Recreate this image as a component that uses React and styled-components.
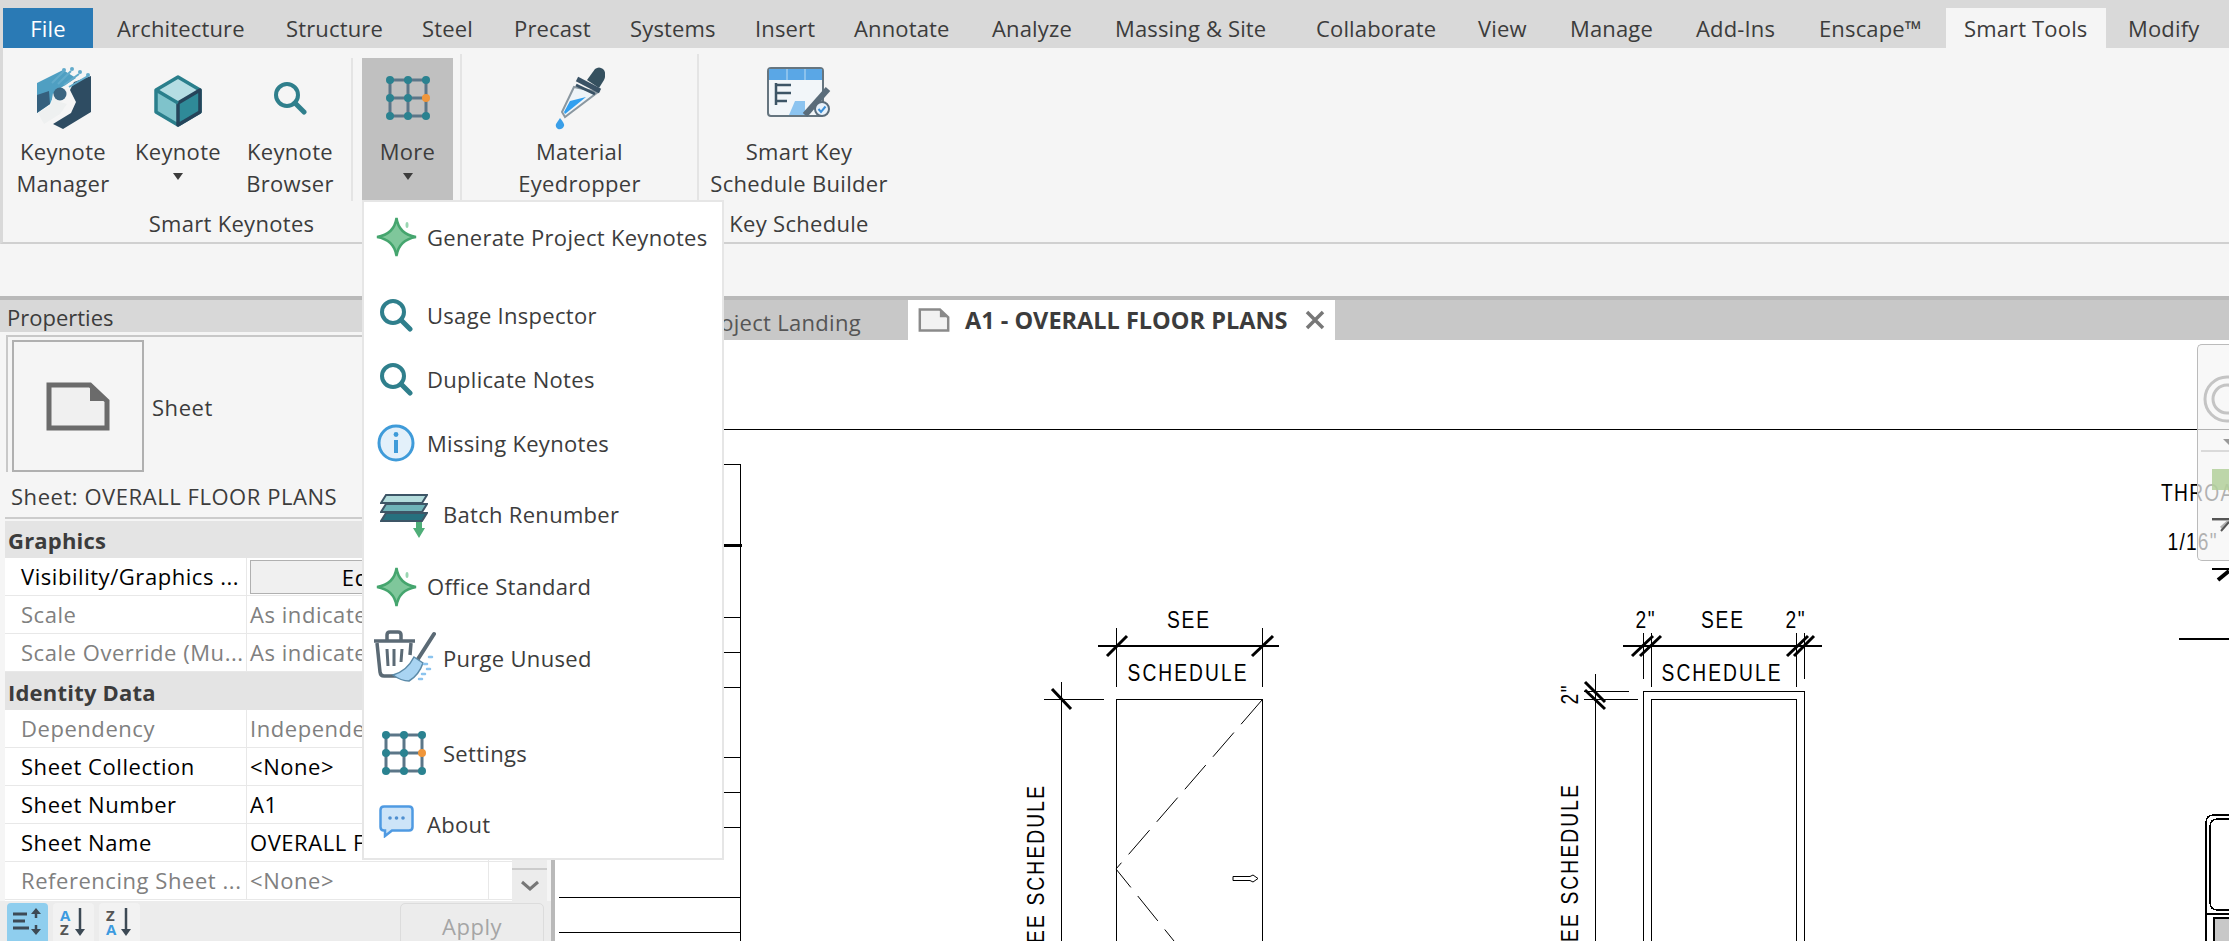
import React from 'react';
import styled, { createGlobalStyle } from 'styled-components';

const GlobalStyle = createGlobalStyle`
	html, body {
		margin: 0;
		padding: 0;
		background: #fff;
		overflow: hidden;
	}
	* {
		box-sizing: border-box;
	}
`;

const tabs = [
	{ label: 'Architecture', w: 169 },
	{ label: 'Structure', w: 136 },
	{ label: 'Steel', w: 92 },
	{ label: 'Precast', w: 116 },
	{ label: 'Systems', w: 125 },
	{ label: 'Insert', w: 99 },
	{ label: 'Annotate', w: 138 },
	{ label: 'Analyze', w: 123 },
	{ label: 'Massing & Site', w: 201 },
	{ label: 'Collaborate', w: 162 },
	{ label: 'View', w: 92 },
	{ label: 'Manage', w: 126 },
	{ label: 'Add-Ins', w: 123 },
	{ label: 'Enscape™', w: 147.5 },
	{ label: 'Smart Tools', w: 160, active: true },
	{ label: 'Modify', w: 100 }
];

const SearchIcon = ({ size = 34 }) => (
	<svg width={size} height={size} viewBox="0 0 34 34" fill="none">
		<circle cx="14" cy="14" r="11" stroke="#2f7f8c" strokeWidth="4" />
		<path d="M22 22 L31 31" stroke="#2f7f8c" strokeWidth="5" strokeLinecap="round" />
	</svg>
);

const GridIcon = () => (
	<svg width="44" height="44" viewBox="0 0 44 44">
		<path d="M4 4H40V40H4Z M22 4V40 M4 22H40" fill="none" stroke="#5b7688" strokeWidth="3" />
		{[4, 22, 40].map((y) =>
			[4, 22, 40].map((x) => <circle key={`${x}-${y}`} cx={x} cy={y} r="4" fill={x === 40 && y === 22 ? '#f0963a' : '#2a8290'} />)
		)}
	</svg>
);

const StarIcon = () => (
	<svg width="41" height="40" viewBox="0 0 41 40">
		<path d="M20.5 1 C22 12 28 18 40 20 C28 22 22 28 20.5 39 C19 28 13 22 1 20 C13 18 19 12 20.5 1Z" fill="#7fc79b" stroke="#45a56e" strokeWidth="2.500" />
		<ellipse cx="31" cy="8" rx="1.5" ry="3" fill="#9ad6b2" />
	</svg>
);

const InfoIcon = () => (
	<svg width="38" height="38" viewBox="0 0 38 38">
		<circle cx="19" cy="19" r="17" fill="#e3f0fa" stroke="#3f9bd9" strokeWidth="3" />
		<circle cx="19" cy="10.5" r="2.4" fill="#3f9bd9" />
		<path d="M19 16V29" stroke="#3f9bd9" strokeWidth="4" />
	</svg>
);

const BatchIcon = () => (
	<svg width="48" height="45" viewBox="0 0 48 45">
		<path d="M36 26H42V35H45L39 45L33 35H36Z" fill="#4fae78" />
		<path d="M6 2H47L42 10H1Z" fill="#b4dcdc" stroke="#3d5566" strokeWidth="2" />
		<path d="M6 11H47L42 19H1Z" fill="#6fb3b8" stroke="#3d5566" strokeWidth="2" />
		<path d="M6 20H47L42 28H1Z" fill="#26707e" stroke="#3d5566" strokeWidth="2" />
	</svg>
);

const PurgeIcon = () => (
	<svg width="63" height="54" viewBox="0 0 63 54" fill="none">
		<path d="M1 12H42 M14 11V6Q14 3 17 3H25Q28 3 28 6V11" stroke="#5b6a75" strokeWidth="3.5" />
		<path d="M4 14L7 43Q7.500 47 11 47H24 M38 14L37 26" stroke="#5b6a75" strokeWidth="3.5" />
		<path d="M14 20L15 37 M21 20V37 M29 20L28 33" stroke="#5b6a75" strokeWidth="3" />
		<path d="M61 5L45 30" stroke="#5b6a75" strokeWidth="4" strokeLinecap="round" />
		<path d="M41 28L50 34Q46 46 36 52Q28 52 20 46Q34 42 41 28Z" fill="#a9d4f2" stroke="#5b8aa8" strokeWidth="1.5" />
		<path d="M56 28h3 M51 35h3 M54 40h3 M49 45h3 M46 50h3" stroke="#8cc4ee" strokeWidth="2.500" strokeLinecap="round" />
	</svg>
);

const BubbleIcon = () => (
	<svg width="35" height="33" viewBox="0 0 35 33">
		<path d="M5 1.500H30Q33.500 1.500 33.500 5V22Q33.500 25.500 30 25.500H13L6 31V25.500H5Q1.500 25.500 1.500 22V5Q1.500 1.500 5 1.500Z" fill="#cde4f8" stroke="#4f9ae2" strokeWidth="2.500" />
		<circle cx="11" cy="13" r="1.800" fill="#4f8fd0" />
		<circle cx="17.500" cy="13" r="1.800" fill="#4f8fd0" />
		<circle cx="24" cy="13" r="1.800" fill="#4f8fd0" />
	</svg>
);

const LogoIcon = () => (
	<svg width="55" height="63" viewBox="0 0 55 63" fill="none">
		<path d="M1 17L27 4L40 12L20 25L14 38L1 47Z" fill="#4f9fc2" />
		<path d="M1 29L13 25L14 38L1 47Z" fill="#35607e" />
		<path d="M38 16L55 10V46L27 63L17 58L35 47L40 36L34 24Z" fill="#2e4c62" />
		<path d="M2 47L15 39L17 27L24 36L31 38L24 48L8 58Z" fill="#eef0f0" />
		<circle cx="24" cy="28" r="6.500" fill="#3b6580" />
		<path d="M16 17L28 5 M22 18L35 5 M28 19L43 8 M33 21L52 10" stroke="#62abcb" strokeWidth="2" />
		<circle cx="28" cy="4" r="2" fill="#62abcb" />
		<circle cx="36" cy="3" r="2" fill="#62abcb" />
		<circle cx="44" cy="6" r="2" fill="#62abcb" />
		<circle cx="52" cy="9" r="2" fill="#62abcb" />
	</svg>
);

const CubeIcon = () => (
	<svg width="48" height="52" viewBox="0 0 48 52">
		<path d="M24 3L45 15L24 28L3 15Z" fill="#b5dde3" />
		<path d="M3 15L24 28V49L3 37Z" fill="#7fc3cb" />
		<path d="M45 15L24 28V49L45 37Z" fill="#2f8a98" />
		<path d="M24 2L46 15V37L24 50L2 37V15Z" fill="none" stroke="#2a7f8c" strokeWidth="3.500" strokeLinejoin="round" />
		<path d="M46 15L24 28V50L46 37Z" fill="none" stroke="#25445a" strokeWidth="3.500" strokeLinejoin="round" />
		<path d="M2 15L24 28" stroke="#2a7f8c" strokeWidth="3.500" />
	</svg>
);

const DropperIcon = () => (
	<svg width="50" height="64" viewBox="0 0 50 64" fill="none">
		<path d="M19 21L43 26L10 51L7 46Z" fill="#eef4f8" stroke="#8a97a0" strokeWidth="2" />
		<path d="M15 35L31 31L10 48L9 46Z" fill="#2f9ff0" />
		<path d="M32 14L40 3Q44 0 48 3Q52 7 49 14L44 22Z" fill="#35505f" />
		<path d="M22 13L45 25" stroke="#3a5265" strokeWidth="5" />
		<path d="M21 19L40 28" stroke="#3a5265" strokeWidth="3" />
		<path d="M5 52Q10 58 9 60Q7 64 3 63Q0 61 1 58Q3 55 5 52Z" fill="#3a9fe8" />
	</svg>
);

const ScheduleIcon = () => (
	<svg width="64" height="50" viewBox="0 0 64 50" fill="none">
		<rect x="1" y="1" width="55" height="48" rx="3" fill="#f2f6f9" stroke="#66757f" strokeWidth="2" />
		<path d="M2 2H55V13H2Z" fill="#5aa7e6" />
		<path d="M20 2V13 M38 2V13" stroke="#9ccbf0" strokeWidth="1.500" />
		<path d="M9 18H24 M9 26H24 M9 34H20 M9 16V38" stroke="#3d5566" strokeWidth="2.500" />
		<path d="M28 34H38V48H22Z" fill="#8cc4f0" />
		<path d="M61 22L38 48" stroke="#5a6c7a" strokeWidth="6" />
		<circle cx="55" cy="42" r="7" fill="#e8f2fb" stroke="#5a6c7a" strokeWidth="2" />
		<path d="M51.500 42L54 45L58.500 39.500" stroke="#3b8fd8" strokeWidth="2" />
	</svg>
);

const SheetGlyph = ({ w, h, stroke, fill }) => (
	<svg width={w} height={h} viewBox="0 0 64 49">
		<path d="M3 3H44L61 19V46H3Z" fill={fill} stroke={stroke} strokeWidth="5" />
		<path d="M44 3L61 19H44Z" fill={stroke} />
	</svg>
);

const menuItems = [
	{ label: 'Generate Project Keynotes', icon: <StarIcon />, gap: 11, lift: 1 },
	{ label: 'Usage Inspector', icon: <SearchIcon />, gap: 28, lift: 1 },
	{ label: 'Duplicate Notes', icon: <SearchIcon />, gap: 14, lift: 1 },
	{ label: 'Missing Keynotes', icon: <InfoIcon />, gap: 14, lift: 1 },
	{ label: 'Batch Renumber', icon: <BatchIcon />, gap: 21, lift: 0, wide: true },
	{ label: 'Office Standard', icon: <StarIcon />, gap: 22, lift: 0.5 },
	{ label: 'Purge Unused', icon: <PurgeIcon />, gap: 22, lift: 3, wide: true },
	{ label: 'Settings', icon: <GridIcon />, gap: 45, lift: 1, wide: true },
	{ label: 'About', icon: <BubbleIcon />, gap: 21, lift: 4 }
];

const App = () => (
	<Screen>
		<GlobalStyle />
		<TabRow>
			<FileTab>File</FileTab>
			{tabs.map((tab) => (
				<Tab key={tab.label} $w={tab.w} $active={tab.active}>
					{tab.label}
				</Tab>
			))}
		</TabRow>
		<Ribbon>
			<Panel $w={457}>
				<PanelBody>
					<RibbonButton $w={120}>
						<IconSlot><LogoIcon /></IconSlot>
						<ButtonLine>Keynote</ButtonLine>
						<ButtonLine>Manager</ButtonLine>
					</RibbonButton>
					<RibbonButton $w={110}>
						<IconSlot $lift={3}><CubeIcon /></IconSlot>
						<ButtonLine>Keynote</ButtonLine>
						<Caret />
					</RibbonButton>
					<RibbonButton $w={114}>
						<IconSlot><SearchIcon /></IconSlot>
						<ButtonLine>Keynote</ButtonLine>
						<ButtonLine>Browser</ButtonLine>
					</RibbonButton>
					<InnerSeparator />
					<RibbonButton $w={91} $pressed>
						<IconSlot><GridIcon /></IconSlot>
						<ButtonLine>More</ButtonLine>
						<Caret />
					</RibbonButton>
				</PanelBody>
				<PanelLabel>Smart Keynotes</PanelLabel>
			</Panel>
			<Panel $w={237} $divided>
				<PanelBody $pad={2}>
					<RibbonButton $w={235}>
						<IconSlot><DropperIcon /></IconSlot>
						<ButtonLine>Material</ButtonLine>
						<ButtonLine>Eyedropper</ButtonLine>
					</RibbonButton>
				</PanelBody>
			</Panel>
			<Panel $w={204} $divided>
				<PanelBody $pad={2}>
					<RibbonButton $w={200}>
						<IconSlot $lift={-6}><ScheduleIcon /></IconSlot>
						<ButtonLine>Smart Key</ButtonLine>
						<ButtonLine>Schedule Builder</ButtonLine>
					</RibbonButton>
				</PanelBody>
				<PanelLabel>Key Schedule</PanelLabel>
			</Panel>
		</Ribbon>
		<OptionsBar />
		<Workspace>
			<PropertiesPanel>
				<PanelTitle>Properties</PanelTitle>
				<TypeSelector>
					<TypePreview>
						<SheetGlyph w={64} h={49} stroke="#6b6b6b" fill="#f0f0f0" />
					</TypePreview>
					<TypeName>Sheet</TypeName>
				</TypeSelector>
				<InstanceLine>Sheet: OVERALL FLOOR PLANS</InstanceLine>
				<TableWrap>
					<PropertyTable>
						<SectionHead>Graphics</SectionHead>
						<PropRow>
							<PropLabel>Visibility/Graphics ...</PropLabel>
							<PropValue><EditButton>Edit...</EditButton></PropValue>
							<PropExtra />
						</PropRow>
						<PropRow>
							<PropLabel $muted>Scale</PropLabel>
							<PropValue $muted>As indicated</PropValue>
							<PropExtra />
						</PropRow>
						<PropRow>
							<PropLabel $muted>Scale Override (Mu...</PropLabel>
							<PropValue $muted>As indicated</PropValue>
							<PropExtra />
						</PropRow>
						<SectionHead>Identity Data</SectionHead>
						<PropRow>
							<PropLabel $muted>Dependency</PropLabel>
							<PropValue $muted>Independent</PropValue>
							<PropExtra />
						</PropRow>
						<PropRow>
							<PropLabel>Sheet Collection</PropLabel>
							<PropValue>&lt;None&gt;</PropValue>
							<PropExtra />
						</PropRow>
						<PropRow>
							<PropLabel>Sheet Number</PropLabel>
							<PropValue>A1</PropValue>
							<PropExtra />
						</PropRow>
						<PropRow>
							<PropLabel>Sheet Name</PropLabel>
							<PropValue>OVERALL FLOOR PLANS</PropValue>
							<PropExtra />
						</PropRow>
						<PropRow>
							<PropLabel $muted>Referencing Sheet ...</PropLabel>
							<PropValue $muted>&lt;None&gt;</PropValue>
							<PropExtra />
						</PropRow>
					</PropertyTable>
					<ScrollColumn>
						<ScrollDown>
							<svg width="20" height="12" viewBox="0 0 20 12" fill="none">
								<path d="M2 2L10 9L18 2" stroke="#777" strokeWidth="3" />
							</svg>
						</ScrollDown>
					</ScrollColumn>
				</TableWrap>
				<SortBar>
					<SortButton $active>
						<svg width="30" height="30" viewBox="0 0 30 30" fill="none">
							<path d="M0 7H14 M0 14H12 M0 21H16" stroke="#3d4a55" strokeWidth="3" />
							<path d="M23 11V5 M23 18V24" stroke="#3d4a55" strokeWidth="2.500" />
							<path d="M18 7L23 1L28 7Z M18 22L23 28L28 22Z" fill="#3d4a55" />
						</svg>
					</SortButton>
					<SortButton>
						<SortGlyph>
							<text x="1" y="14" fill="#3d9be0">A</text>
							<text x="1" y="28" fill="#555">Z</text>
							<path d="M21 1V25" stroke="#3d4a55" strokeWidth="2.500" />
							<path d="M16 22L21 29L26 22Z" fill="#3d4a55" />
						</SortGlyph>
					</SortButton>
					<SortButton>
						<SortGlyph>
							<text x="1" y="14" fill="#555">Z</text>
							<text x="1" y="28" fill="#3d9be0">A</text>
							<path d="M21 1V25" stroke="#3d4a55" strokeWidth="2.500" />
							<path d="M16 22L21 29L26 22Z" fill="#3d4a55" />
						</SortGlyph>
					</SortButton>
					<ApplyButton>Apply</ApplyButton>
				</SortBar>
			</PropertiesPanel>
			<ViewArea>
				<ViewTabs>
					<InactiveView>Project Landing</InactiveView>
					<ActiveView>
						<SheetGlyph w={32} h={24} stroke="#8a8a8a" fill="#f2f2f2" />
						<ViewTitle>A1 - OVERALL FLOOR PLANS</ViewTitle>
						<svg width="20" height="20" viewBox="0 0 20 20" fill="none">
							<path d="M2 2L18 18 M18 2L2 18" stroke="#777" strokeWidth="3.500" />
						</svg>
					</ActiveView>
				</ViewTabs>
				<Sheet />
				<NavBar>
					<svg width="32" height="217" viewBox="0 0 32 217" fill="none">
						<circle cx="30" cy="55" r="22" stroke="#c4c4c4" strokeWidth="3" />
						<circle cx="30" cy="55" r="14" stroke="#c4c4c4" strokeWidth="3" />
						<path d="M26 95H32V101Z" fill="#999" />
						<path d="M4 107H32" stroke="#d0d0d0" strokeWidth="1.500" />
						<path d="M15 125H32V146H15Z" fill="#b3d09b" opacity="0.85" />
						<path d="M15 175H32 M24 187L32 178" stroke="#555" strokeWidth="2" />
					</svg>
				</NavBar>
			</ViewArea>
		</Workspace>
		<DropMenu>
			{menuItems.map((item) => (
				<MenuRow key={item.label} $gap={item.gap}>
					<MenuIcon $wide={item.wide} $lift={item.lift}>
						{item.icon}
					</MenuIcon>
					<MenuText>{item.label}</MenuText>
				</MenuRow>
			))}
		</DropMenu>
	</Screen>
);

// CAD lettering is narrower than the font, so squeeze it and let the spacing take up the rest
const SQUEEZE = 0.8;

const DrawText = ({ x, y, len, up, end, children }) => (
	<SheetText
		transform={`translate(${x} ${y}) ${up ? 'rotate(-90) ' : ''}scale(${SQUEEZE} 1)`}
		textAnchor={end ? 'end' : 'middle'}
		textLength={len / SQUEEZE}
		lengthAdjust="spacing"
	>
		{children}
	</SheetText>
);

// the drawing on the sheet, written in page coordinates
const leftRules = [464.5, 617.5, 652.5, 687.5, 757.5, 792.5, 827.5, 897.5, 932.5];

const Sheet = () => (
	<SheetSvg viewBox="555 340 1674 601" width="1674" height="601">
		<g stroke="#000" strokeWidth="1.500" fill="none" shapeRendering="crispEdges">
			<path d="M557 429.500H2229" />
			<path d="M740.500 464V941" />
			{leftRules.map((y) => (
				<path key={y} d={`M559 ${y}H740.500`} />
			))}

			{/* single door */}
			<path d="M1098 646H1279 M1116.500 628V687 M1262.500 628V687" />
			<path d="M1061.500 682V941 M1044 699.500H1104" />
			<path d="M1116.500 941V699.500H1262.500V941" />
			{/* double frame */}
			<path d="M1623 646H1822 M1643.500 633V679 M1651.500 633V687 M1796.500 633V687 M1804.500 633V679" />
			<path d="M1595.500 674V941 M1584 691.500H1629 M1584 699.500H1638" />
			<path d="M1643.500 941V691.500H1804.500V941 M1651.500 941V699.500H1796.500V941" />
			{/* right edge */}
			<path d="M2212 520H2229 M2212 569H2229" />
			<path d="M2179 639H2229" strokeWidth="2" />
			<path d="M2229 815H2214Q2206 815 2206 823V941 M2229 819H2218Q2210 819 2210 827V902Q2210 910 2218 910H2229 M2207 914H2229 M2214 941V918H2229" />
		</g>
		<path d="M2215 919H2229V941H2215Z" fill="#c8c8c8" />

		<g stroke="#000" strokeWidth="3" fill="none">
			<path d="M723 545.500H742" />
			<path d="M1107 656L1127 636 M1252 656L1273 636 M1052 689L1071 709" />
			<path d="M1632 656L1653 636 M1640 656L1661 636 M1787 656L1808 636 M1794 656L1814 636" />
			<path d="M1585 682L1605 702 M1585 690L1605 709" />
			<path d="M2218 580L2229 571" strokeWidth="4" />
			<path d="M2221 528L2229 521" />
		</g>

		<g stroke="#000" strokeWidth="1" fill="none">
			<path d="M1262 700L1116 869L1174 941" strokeDasharray="32 11" />
			<path d="M1233 876.500H1250L1253 875L1258 878.500L1253 882L1250 880.500H1233Z" />
		</g>

		<DrawText x={1188} y={628} len={42}>SEE</DrawText>
		<DrawText x={1187} y={681} len={119}>SCHEDULE</DrawText>
		<DrawText x={1722} y={628} len={42}>SEE</DrawText>
		<DrawText x={1721} y={681} len={119}>SCHEDULE</DrawText>
		<DrawText x={1645} y={628} len={19}>2"</DrawText>
		<DrawText x={1795} y={628} len={19}>2"</DrawText>
		<DrawText x={1578} y={695} len={19} up>2"</DrawText>
		<DrawText x={1044} y={786} len={172} up end>SEE SCHEDULE</DrawText>
		<DrawText x={1578} y={785} len={172} up end>SEE SCHEDULE</DrawText>
		<DrawText x={2203} y={501} len={84}>THROAT</DrawText>
		<DrawText x={2192} y={550} len={49}>1/16"</DrawText>
	</SheetSvg>
);

export default App;

const uiFont = `"Open Sans", "Noto Sans", sans-serif`;

const Screen = styled.div`
	position: relative;
	width: 2229px;
	height: 941px;
	overflow: hidden;
	background: #fff;
	font-family: ${uiFont};
	font-size: 22px;
	letter-spacing: 0.3px;
	color: #3c3c3c;
`;

const TabRow = styled.div`
	display: flex;
	align-items: flex-end;
	height: 48px;
	padding-left: 3px;
	background: #d9d9d9;
	letter-spacing: 0.15px;
`;

const FileTab = styled.div`
	display: flex;
	align-items: center;
	justify-content: center;
	width: 90px;
	height: 40px;
	margin-right: 3.500px;
	background: #2a7ab5;
	color: #fff;
`;

const Tab = styled.div`
	display: flex;
	align-items: center;
	width: ${(props) => props.$w}px;
	height: 40px;
	padding-left: ${(props) => (props.$active ? '18px' : '20.500px')};
	margin-right: ${(props) => (props.$active ? '1.500px' : '0')};
	background: ${(props) => (props.$active ? '#f5f5f5' : 'transparent')};
	white-space: nowrap;
	flex-shrink: 0;
`;

const Ribbon = styled.div`
	display: flex;
	height: 196px;
	background: #f5f5f5;
	border-left: 3px solid #d9d9d9;
	border-bottom: 2px solid #d0d0d0;
`;

const Panel = styled.div`
	display: flex;
	flex-direction: column;
	width: ${(props) => props.$w}px;
	position: relative;
	${(props) =>
		props.$divided &&
		`
		&::before {
			content: '';
			position: absolute;
			left: 0;
			top: 6px;
			height: 146px;
			width: 2px;
			background: #e4e4e4;
		}
	`}
`;

const PanelBody = styled.div`
	display: flex;
	height: 152px;
	padding-top: 10px;
	padding-left: ${(props) => (props.$pad ? props.$pad : 0)}px;
`;

const RibbonButton = styled.div`
	display: flex;
	flex-direction: column;
	align-items: center;
	width: ${(props) => props.$w}px;
	height: 142px;
	flex-shrink: 0;
	background: ${(props) => (props.$pressed ? '#c0c0c0' : 'transparent')};
`;

const IconSlot = styled.div`
	display: flex;
	align-items: center;
	justify-content: center;
	height: 79px;
	margin-top: ${(props) => (props.$lift ? props.$lift : 0)}px;
	margin-bottom: ${(props) => (props.$lift ? -props.$lift : 0)}px;
	flex-shrink: 0;
`;

const ButtonLine = styled.div`
	height: 32px;
	line-height: 29px;
	white-space: nowrap;
`;

const Caret = styled.div`
	width: 0;
	height: 0;
	margin-top: 4px;
	border-left: 5px solid transparent;
	border-right: 5px solid transparent;
	border-top: 7px solid #3c3c3c;
`;

const InnerSeparator = styled.div`
	width: 2px;
	height: 143px;
	margin: 0 9px 0 4px;
	background: #e4e4e4;
	flex-shrink: 0;
`;

const PanelLabel = styled.div`
	height: 42px;
	line-height: 46px;
	text-align: center;
	white-space: nowrap;
`;

const OptionsBar = styled.div`
	height: 56px;
	background: #f5f5f5;
	border-bottom: 4px solid #b9b9b9;
`;

const Workspace = styled.div`
	display: flex;
	height: 641px;
`;

const PropertiesPanel = styled.div`
	display: flex;
	flex-direction: column;
	width: 555px;
	flex-shrink: 0;
	background: #f5f5f5;
	border-right: 4px solid #b9b9b9;
	letter-spacing: 0.55px;
`;

const PanelTitle = styled.div`
	height: 32px;
	line-height: 35px;
	padding-left: 7px;
	background: #d8d8d8;
	letter-spacing: 0;
`;

const TypeSelector = styled.div`
	display: flex;
	align-items: center;
	height: 137px;
	margin: 3px 0 0 6px;
	padding: 3px 0 0 4px;
	border-top: 2px solid #c8c8c8;
	border-left: 2px solid #c8c8c8;
`;

const TypePreview = styled.div`
	display: flex;
	align-items: center;
	justify-content: center;
	width: 132px;
	height: 132px;
	border: 2px solid #b0b0b0;
`;

const TypeName = styled.div`
	margin-left: 8px;
	margin-top: 2px;
`;

const InstanceLine = styled.div`
	height: 47px;
	line-height: 48px;
	padding-left: 11px;
	margin-left: 5px;
	margin-bottom: 2px;
	border-bottom: 2px solid #ccc;
	text-indent: -5px;
`;

const TableWrap = styled.div`
	display: flex;
	height: 380px;
	margin-left: 5px;
`;

const PropertyTable = styled.div`
	width: 507px;
	background: #fff;
`;

const SectionHead = styled.div`
	height: 38px;
	line-height: 41px;
	padding-left: 3px;
	background: #e4e4e4;
	font-weight: 700;
	letter-spacing: 0.2px;
	&:first-child {
		height: 37px;
		line-height: 39px;
	}
`;

const PropRow = styled.div`
	display: grid;
	grid-template-columns: 242px 241px 24px;
	height: 38px;
	border-bottom: 1.500px solid #e8e8e8;
	line-height: 37px;
	white-space: nowrap;
	overflow: hidden;
`;

const PropLabel = styled.div`
	padding-left: 16px;
	color: ${(props) => (props.$muted ? '#808080' : '#000')};
	border-right: 1.500px solid #e8e8e8;
	overflow: hidden;
`;

const PropValue = styled.div`
	padding-left: 3px;
	color: ${(props) => (props.$muted ? '#808080' : '#000')};
	overflow: hidden;
`;

const PropExtra = styled.div`
	border-left: 1.500px solid #e8e8e8;
`;

const EditButton = styled.div`
	width: 244px;
	height: 34px;
	margin-top: 2px;
	line-height: 32px;
	text-align: center;
	color: #000;
	background: #f0f0f0;
	border: 1px solid #b0b0b0;
`;

const ScrollColumn = styled.div`
	display: flex;
	flex-direction: column;
	justify-content: flex-end;
	width: 35px;
	background: #ececec;
`;

const ScrollDown = styled.div`
	display: flex;
	align-items: center;
	justify-content: center;
	height: 33px;
	border-top: 2px solid #ccc;
`;

const SortBar = styled.div`
	display: flex;
	align-items: flex-start;
	gap: 5px;
	height: 40px;
	padding: 2px 7px 0 7px;
	background: #ececec;
`;

const SortButton = styled.div`
	display: flex;
	align-items: center;
	justify-content: center;
	width: 41px;
	height: 38px;
	border-radius: 4px 4px 0 0;
	background: ${(props) => (props.$active ? '#8fceee' : '#f2f2f2')};
`;

const SortGlyph = styled.svg.attrs({ width: 30, height: 30, viewBox: '0 0 30 30', fill: 'none' })`
	font-family: ${uiFont};
	font-size: 15px;
	font-weight: 700;
	letter-spacing: 0;
`;

const ApplyButton = styled.div`
	width: 144px;
	height: 44px;
	margin-left: auto;
	margin-right: 0;
	line-height: 44px;
	text-align: center;
	color: #a5a5a5;
	border: 1.500px solid #dcdcdc;
	border-radius: 5px;
`;

const ViewArea = styled.div`
	position: relative;
	display: flex;
	flex-direction: column;
	flex: 1;
	min-width: 0;
`;

const ViewTabs = styled.div`
	display: flex;
	height: 40px;
	flex-shrink: 0;
	background: #c8c8c8;
`;

const InactiveView = styled.div`
	width: 353px;
	padding-right: 47px;
	line-height: 44px;
	text-align: right;
	color: #555;
	white-space: nowrap;
`;

const ActiveView = styled.div`
	display: flex;
	align-items: center;
	width: 427px;
	padding-left: 10px;
	background: #fff;
	letter-spacing: 0;
	svg:last-child {
		margin-left: 18px;
	}
`;

const ViewTitle = styled.div`
	margin-left: 15px;
	font-size: 23.5px;
	font-weight: 700;
	color: #3c3c3c;
	white-space: nowrap;
`;

const SheetSvg = styled.svg`
	display: block;
	flex-shrink: 0;
`;

const SheetText = styled.text`
	font-family: "Liberation Sans", sans-serif;
	font-size: 24px;
	letter-spacing: 0;
	fill: #000;
`;

const NavBar = styled.div`
	position: absolute;
	right: 0;
	top: 44px;
	width: 32px;
	height: 217px;
	background: rgba(245, 245, 245, 0.72);
	border: 1.500px solid #bbb;
	border-right: none;
	border-radius: 5px 0 0 5px;
	svg {
		display: block;
		margin: -1.500px;
	}
`;

const DropMenu = styled.div`
	position: absolute;
	left: 362px;
	top: 200px;
	width: 361.500px;
	height: 660px;
	padding-left: 1px;
	background: #fff;
	border: 2px solid #e6e6e6;
`;

const MenuRow = styled.div`
	display: flex;
	align-items: center;
	height: 50px;
	margin-top: ${(props) => props.$gap}px;
`;

const MenuIcon = styled.div`
	display: flex;
	align-items: center;
	justify-content: center;
	width: ${(props) => (props.$wide ? 78 : 62)}px;
	margin-bottom: ${(props) => props.$lift * 2}px;
	flex-shrink: 0;
`;

const MenuText = styled.div`
	margin-bottom: 2px;
	white-space: nowrap;
	color: #3c3c3c;
`;
